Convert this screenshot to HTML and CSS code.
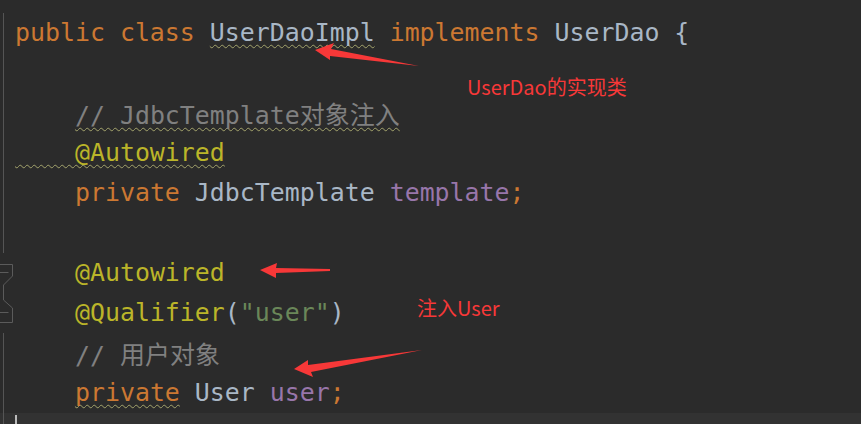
FILE: index.html
```html
<!DOCTYPE html>
<html lang="en">
<head>
    <meta charset="utf-8">
    <title>UserDaoImpl.java</title>
    <link rel="stylesheet" href="styles.css">
</head>
<body>
    <div class="editor">
        <div class="line"><span class="gutter"></span><code><span class="kw">public class </span><span class="warn">UserDaoImpl</span><span class="kw"> implements </span>UserDao {</code></div>
        <div class="line"><span class="gutter"></span><code> </code></div>
        <div class="line"><span class="gutter"></span><code>    <span class="cm warn">// JdbcTemplate<span class="cjk">对象注入</span></span></code></div>
        <div class="line"><span class="gutter"></span><code><span class="an warn">    @Autowired</span></code></div>
        <div class="line"><span class="gutter"></span><code>    <span class="kw">private </span>JdbcTemplate <span class="fd">template</span><span class="kw">;</span></code></div>
        <div class="line"><span class="gutter"></span><code> </code></div>
        <div class="line">
            <span class="gutter">
                <svg class="fold" width="15" height="40" viewBox="0 0 15 40">
                    <path d="M0 11.5 H12.5 V23 L3.5 32 V40" />
                    <path d="M0 19.5 H8.5" />
                </svg>
            </span>
            <code>    <span class="an">@Autowired</span></code>
        </div>
        <div class="line">
            <span class="gutter">
                <svg class="fold" width="15" height="40" viewBox="0 0 15 40">
                    <path d="M3.5 0 V7 L12.5 15 V29.5 H0" />
                    <path d="M0 19.5 H8.5" />
                </svg>
            </span>
            <code>    <span class="an">@Qualifier</span>(<span class="str">"user"</span>)</code>
        </div>
        <div class="line"><span class="gutter"></span><code>    <span class="cm">// <span class="cjk">用户对象</span></span></code></div>
        <div class="line"><span class="gutter"></span><code>    <span class="kw warn">private</span> User <span class="fd">user</span><span class="kw">;</span></code></div>
        <div class="line current"><span class="gutter"></span><code><span class="caret"></span></code></div>
    </div>

    <div class="note note-impl">UserDao的实现类</div>
    <div class="note note-user">注入User</div>

    <svg class="arrows" width="861" height="424" viewBox="0 0 861 424">
        <polygon points="315,50 334,43 331,49 419,66 330,56 330,60" />
        <polygon points="260,270 277,263 276,268 330,269 330,271 276,273 276,278" />
        <polygon points="294,369 308,360 308,365 422,350 311,372 313,377" />
    </svg>
</body>
</html>
```

FILE: styles.css
```css
* {
    margin: 0;
    padding: 0;
    box-sizing: border-box;
}
body {
    width: 861px;
    height: 424px;
    overflow: hidden;
    background: #2b2b2b;
    position: relative;
}
.editor {
    padding-top: 13px;
    font-family: "DejaVu Sans Mono", monospace;
    font-size: 24.9px;
    color: #a9b7c6;
}
.line {
    display: flex;
    height: 40px;
    line-height: 40px;
}
.gutter {
    width: 15px;
    flex: none;
    position: relative;
    background: linear-gradient(#555555, #555555) 3px 0 / 1px 100% no-repeat;
}
.fold {
    display: block;
    background: #2b2b2b;
}
.fold path {
    fill: none;
    stroke: #5b5b5b;
    stroke-width: 1;
}
code {
    font-family: inherit;
    white-space: pre;
}
.cjk {
    font-family: "Noto Sans CJK SC", sans-serif;
    font-size: 25px;
}
.kw { color: #cc7832; }
.an { color: #bbb529; }
.cm { color: #808080; }
.str { color: #6a8759; }
.fd { color: #9876aa; }
.warn {
    text-decoration: underline wavy #a3a36c;
    text-decoration-thickness: 1px;
    text-underline-offset: 3px;
    text-decoration-skip-ink: none;
}
.line.current {
    height: 11px;
    background: #323232;
    overflow: hidden;
}
.caret {
    display: inline-block;
    width: 2px;
    height: 9px;
    margin-top: 2px;
    background: #bbbbbb;
    vertical-align: top;
}
.note {
    position: absolute;
    color: #f73838;
    font-family: "Noto Sans CJK SC", sans-serif;
    font-size: 20px;
    line-height: 28px;
}
.note-impl {
    left: 467px;
    top: 73px;
}
.note-user {
    left: 417px;
    top: 294px;
}
.arrows {
    position: absolute;
    left: 0;
    top: 0;
}
.arrows polygon {
    fill: #f73838;
}
```
